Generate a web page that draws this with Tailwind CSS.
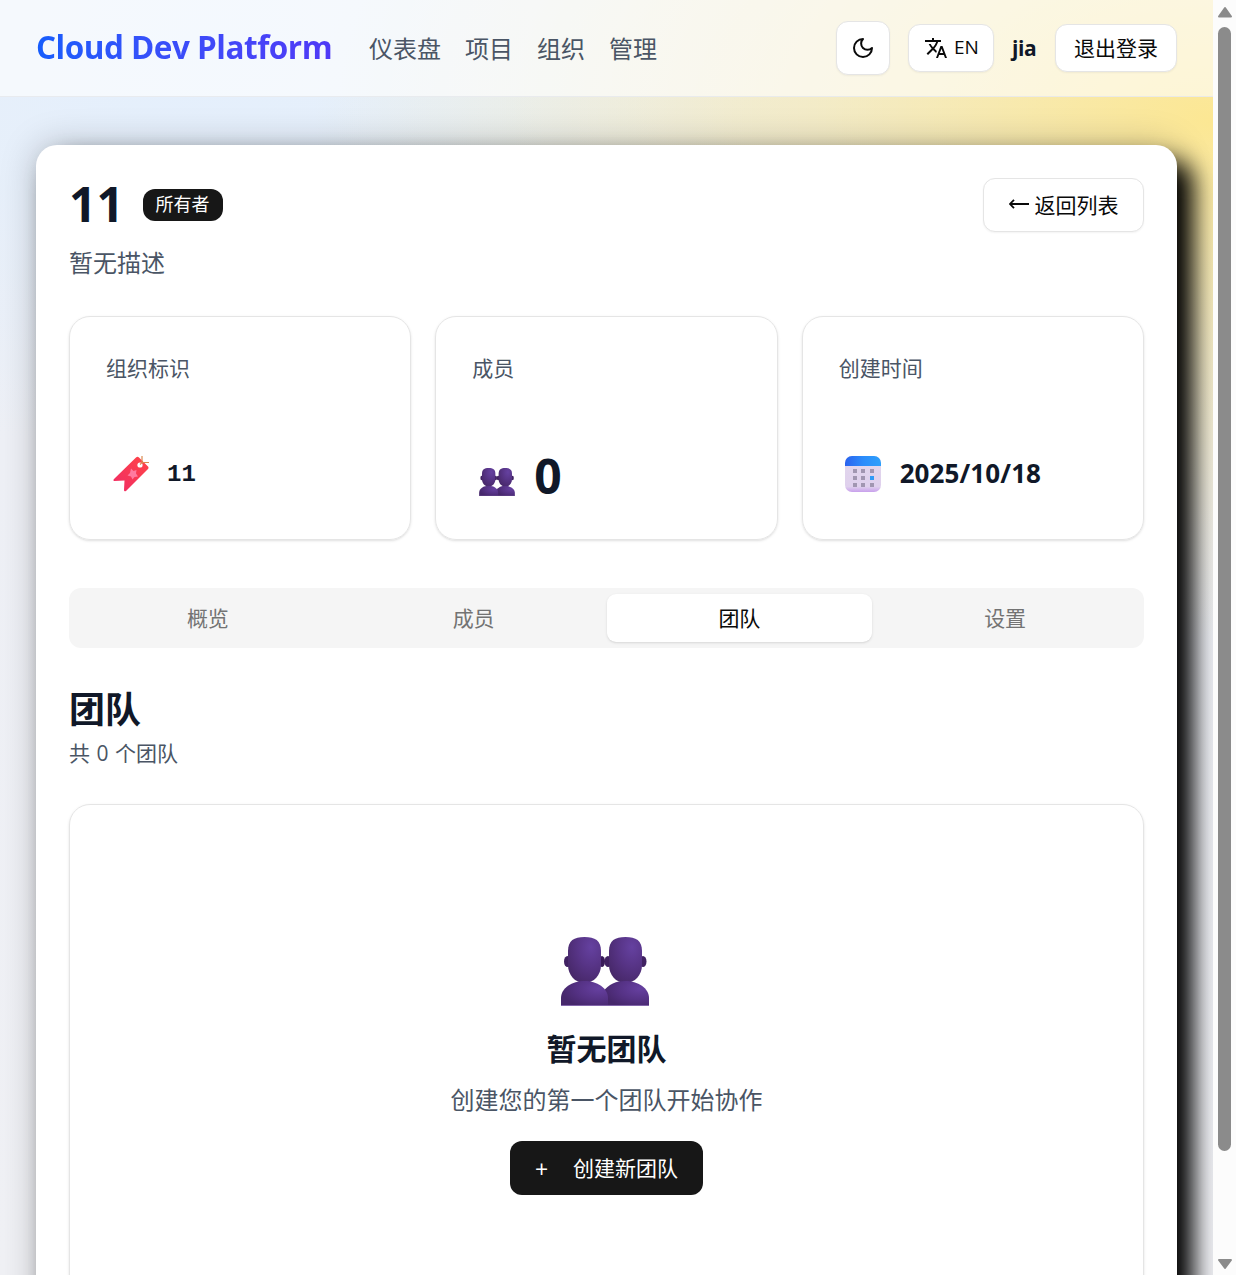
<!DOCTYPE html>
<html lang="zh-CN">
<head>
<meta charset="utf-8">
<title>Cloud Dev Platform</title>
<script src="https://cdn.jsdelivr.net/npm/@tailwindcss/browser@4"></script>
</head>
<body class="h-[1275px] overflow-hidden font-['Open_Sans','Noto_Sans_CJK_SC',sans-serif] text-[24px] leading-[36px] text-[#101828]">
<svg class="absolute size-0" aria-hidden="true">
  <defs>
    <radialGradient id="head" cx=".7" cy=".22" r=".85"><stop offset="0" stop-color="#6541a0"/><stop offset=".5" stop-color="#573486"/><stop offset="1" stop-color="#472869"/></radialGradient>
    <radialGradient id="torso" cx=".8" cy=".3" r=".8"><stop offset="0" stop-color="#6640a0"/><stop offset=".6" stop-color="#543183"/><stop offset="1" stop-color="#46276b"/></radialGradient>
    <linearGradient id="tag" x1="1" y1="0" x2="0" y2="1"><stop offset="0" stop-color="#ff4546"/><stop offset="1" stop-color="#f02b66"/></linearGradient>
    <linearGradient id="calTop" x1="0" y1="0" x2="1" y2="0"><stop offset="0" stop-color="#2a62ee"/><stop offset=".5" stop-color="#2b8cfb"/><stop offset="1" stop-color="#2da0fb"/></linearGradient>
    <linearGradient id="calBody" x1="0" y1="0" x2="0" y2="1"><stop offset="0" stop-color="#e2d8ec"/><stop offset=".85" stop-color="#dfd0ed"/><stop offset="1" stop-color="#c8a0ec"/></linearGradient>
    <symbol id="people" viewBox="0 0 88 69">
      <ellipse cx="47" cy="24.500" rx="3.500" ry="5.500" fill="#412262"/>
      <ellipse cx="82" cy="24.500" rx="3.500" ry="5.500" fill="#412262"/>
      <path d="M48 14C48 3.500 54 0 64.500 0S81 3.500 81 14v14c0 10-7 18-16.500 18S48 38 48 28z" fill="url(#head)"/>
      <path d="M42 69V55c5-8 14-11 22-11 13 0 24 7 24 17v8z" fill="url(#torso)"/>
      <ellipse cx="6.500" cy="24.500" rx="3.500" ry="5.500" fill="#412262"/>
      <ellipse cx="41" cy="24.500" rx="3" ry="5.500" fill="#391b59"/>
      <path d="M7 14C7 3.500 13 0 23.500 0S40 3.500 40 14v14c0 10-7 18-16.500 18S7 38 7 28z" fill="url(#head)"/>
      <path d="M0 69v-8c0-10 11-17 23.500-17S47 51 47 61v8z" fill="url(#torso)"/>
      <path d="M0 68.500h88" stroke="#8265aa"/>
    </symbol>
  </defs>
</svg>
<div class="flex h-full">
  <div class="flex w-[1213px] flex-col overflow-hidden bg-[radial-gradient(ellipse_900px_520px_at_1213px_120px,#fce793_0%,#fce793e0_10%,#fce79380_42%,#fce79328_78%,transparent_100%),radial-gradient(ellipse_560px_420px_at_200px_40px,#e4effc_0%,#e4effca0_50%,transparent_100%),linear-gradient(#eaeff8,#eef0f6_35%,#f0f1f5)]">
    <header class="flex h-[97px] shrink-0 items-center border-b border-[#e5e7eb]/80 bg-white/60 pl-9 pr-9">
      <div class="-mt-0.5 w-[297px] whitespace-nowrap bg-gradient-to-r from-[#155dfc] to-[#4f39f6] bg-clip-text text-[31.5px] font-bold leading-[48px] tracking-[-0.5px] text-transparent">Cloud Dev Platform</div>
      <nav class="ml-9 flex gap-6 pt-px text-[#4a5565]"><a>仪表盘</a><a>项目</a><a>组织</a><a>管理</a></nav>
      <div class="ml-auto flex items-center">
        <button class="flex size-[54px] items-center justify-center rounded-[12px] border border-[#e5e5e5] bg-white shadow-xs">
          <svg class="size-6" viewBox="0 0 24 24" fill="none" stroke="#0a0a0a" stroke-width="2" stroke-linecap="round" stroke-linejoin="round"><path d="M12 3a6 6 0 0 0 9 9 9 9 0 1 1-9-9Z"/></svg>
        </button>
        <button class="ml-[18px] flex h-12 w-[86px] items-center rounded-[12px] border border-[#e5e5e5] bg-white pl-[15px] text-[19px] text-[#0a0a0a] shadow-xs">
          <svg class="size-6" viewBox="0 0 24 24" fill="#0a0a0a"><path d="m12.870 15.070-2.540-2.510.030-.030c1.740-1.940 2.980-4.170 3.710-6.530H17V4h-7V2H8v2H1v1.990h11.170C11.500 7.920 10.440 9.750 9 11.350 8.070 10.320 7.300 9.190 6.690 8h-2c.730 1.630 1.730 3.170 2.980 4.560l-5.090 5.020L4 19l5-5 3.110 3.110.760-2.040zM18.500 10h-2L12 22h2l1.120-3h4.750L21 22h2l-4.500-12zm-2.620 7 1.620-4.330L19.120 17h-3.240z"/></svg>
          <span class="-mt-0.5 ml-[6px]">EN</span>
        </button>
        <span class="ml-[18px] w-[25px] text-[21px] font-bold tracking-[-0.4px]">jia</span>
        <button class="ml-[18px] h-12 w-[122px] whitespace-nowrap rounded-[12px] border border-[#e5e5e5] bg-white text-[21px] text-[#0a0a0a] shadow-xs">退出登录</button>
      </div>
    </header>
    <main class="mx-9 mt-12 h-[1300px] shrink-0 rounded-[21px] bg-white px-[33px] pt-[33px] shadow-[0_0_36px_rgba(0,0,0,0.22),16px_16px_24px_#000]">
      <div class="flex h-[102px] justify-between">
        <div>
          <div class="flex h-[54px] items-center">
            <h1 class="-mt-0.5 w-[56px] text-[48px] font-bold leading-[54px]">11</h1>
            <span class="ml-[18px] flex h-8 w-20 items-center justify-center rounded-[12px] bg-[#171717] pr-px pb-0.5 text-[18px] text-white">所有者</span>
          </div>
          <p class="mt-[13px] text-[#4a5565]">暂无描述</p>
        </div>
        <button class="flex h-[54px] w-[161px] items-center justify-center whitespace-nowrap rounded-[12px] border border-[#e5e5e5] bg-white text-[21px] text-[#0a0a0a] shadow-xs">
          <svg class="mr-[6px] h-3 w-5" viewBox="0 0 20 12" fill="none" stroke="#0a0a0a" stroke-width="1.800"><path d="M1 5h19M5 .8 1 5 5 9.200"/></svg>返回列表</button>
      </div>
      <div class="mt-[36px] grid grid-cols-3 gap-6">
        <section class="flex h-[224px] flex-col rounded-[21px] border border-[#e5e5e5] px-9 pt-[33px] shadow-sm">
          <h2 class="text-[21px] text-[#4a5565]">组织标识</h2>
          <div class="mt-[70px] flex h-9 items-center">
            <svg class="ml-[7px] size-9" viewBox="0 0 36 36"><path d="M23 1.500Q24.500 0 26 1.500L35 10.500q1 1 0 2.500L13 35q-2 1-2-1l.500-9.500L1.500 25q-2 0-.500-2z" fill="url(#tag)"/><circle cx="27" cy="9" r="2.600" fill="#fff"/><path d="M27 8.500 29 6.500H36M29 7V0" fill="none" stroke="#d98b50" stroke-width="1.200"/><path d="m18 12.500 2.500 2.500 3-1-.5 3.500 2 3-3.500.5-2 2.500-1.500-3-3.500-1 2.500-2.500z" fill="#ff7a9f"/></svg>
            <span class="ml-[18px] mt-px font-['Liberation_Mono',monospace] text-[24px] font-bold">11</span>
          </div>
        </section>
        <section class="flex h-[224px] flex-col rounded-[21px] border border-[#e5e5e5] px-9 pt-[33px] shadow-sm">
          <h2 class="text-[21px] text-[#4a5565]">成员</h2>
          <div class="mt-[63px] flex h-[54px] items-center">
            <svg class="ml-[7px] mt-[11px] h-7 w-9"><use href="#people"/></svg>
            <span class="ml-[19px] text-[48px] font-bold leading-[54px]">0</span>
          </div>
        </section>
        <section class="flex h-[224px] flex-col rounded-[21px] border border-[#e5e5e5] px-9 pt-[33px] shadow-sm">
          <h2 class="text-[21px] text-[#4a5565]">创建时间</h2>
          <div class="mt-[70px] flex h-9 items-center">
            <svg class="ml-[6px] size-9" viewBox="0 0 36 36"><rect width="36" height="36" rx="7" fill="url(#calBody)"/><path d="M0 10V7a7 7 0 0 1 7-7h22a7 7 0 0 1 7 7v3z" fill="url(#calTop)"/><g fill="#a196b1"><path d="M8 13h4v4H8zM16 13h4v4h-4zM25 13h4v4h-4zM8 20h4v4H8zM16 20h4v4h-4zM8 27h4v4H8zM16 27h4v4h-4zM25 27h4v4h-4z"/></g><path d="M25 20h4v4h-4z" fill="#2f9af6"/></svg>
            <span class="-mt-0.5 ml-[19px] text-[26px] font-bold tracking-[0.1px]">2025/10/18</span>
          </div>
        </section>
      </div>
      <div class="mt-[48px] grid h-[60px] grid-cols-4 rounded-[12px] bg-[#f5f5f5] p-[6px] text-center text-[21px] leading-[48px] text-[#737373]">
        <span>概览</span><span>成员</span><span class="rounded-[9px] bg-white text-[#0a0a0a] shadow-sm">团队</span><span>设置</span>
      </div>
      <h2 class="mt-[38px] text-[36px] font-bold leading-[48px]">团队</h2>
      <p class="mt-px text-[21px] leading-[36px] text-[#4a5565] [word-spacing:1px]">共 0 个团队</p>
      <section class="mt-[33px] flex h-[600px] flex-col items-center rounded-[21px] border border-[#e5e5e5] pt-[132px] shadow-sm">
        <svg class="mr-[3px] h-[69px] w-[88px]"><use href="#people"/></svg>
        <h3 class="mt-[25px] text-[30px] font-bold leading-[36px]">暂无团队</h3>
        <p class="mt-[15px] text-[#4a5565]">创建您的第一个团队开始协作</p>
        <button class="mt-[23px] flex h-[54px] w-[193px] items-center rounded-[12px] bg-[#171717] pl-[25px] text-[21px] text-white"><span class="w-[38px] pt-0.5 text-left text-[23px]">+</span>创建新团队</button>
      </section>
    </main>
  </div>
  <div class="flex w-[23px] flex-col items-center bg-[#fcfcfc]">
    <svg class="mt-[6px] h-3 w-4 shrink-0" viewBox="0 0 16 12"><path d="M8 2 14 10.500H2z" fill="#8b8b8b" stroke="#8b8b8b" stroke-width="2" stroke-linejoin="round"/></svg>
    <div class="mt-[9px] h-[1124px] w-[13px] rounded-full bg-[#8b8b8b]"></div>
    <svg class="mt-auto mb-[5px] h-3 w-4 shrink-0" viewBox="0 0 16 12"><path d="M8 10 14 2H2z" fill="#8b8b8b" stroke="#8b8b8b" stroke-width="2" stroke-linejoin="round"/></svg>
  </div>
</div>
</body>
</html>
